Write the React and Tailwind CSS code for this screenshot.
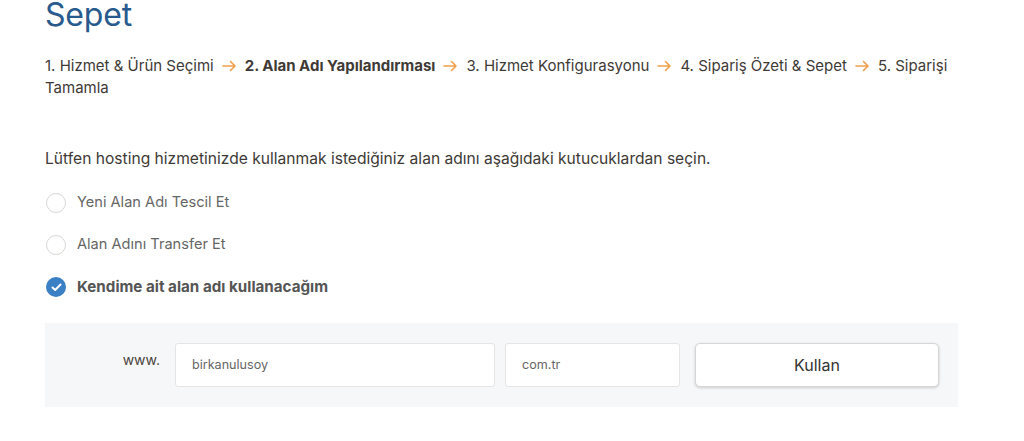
import React from "react";

const Arrow = () => (
  <svg className="inline-block align-baseline mx-[8px] relative top-[1px]" width="15" height="12" viewBox="0 0 15 12" fill="none">
    <path d="M1 6H13M8.5 1.5L13 6L8.5 10.5" stroke="#f0a04b" strokeWidth="1.6" strokeLinecap="round" strokeLinejoin="round" />
  </svg>
);

function Radio({ checked, label }) {
  return (
    <div className="flex items-center h-[42px]">
      {checked ? (
        <span className="w-[20px] h-[20px] rounded-full bg-[#3b7fc4] flex items-center justify-center">
          <svg width="11" height="9" viewBox="0 0 11 9" fill="none">
            <path d="M1.5 4.5L4.2 7L9.5 1.5" stroke="white" strokeWidth="2" strokeLinecap="round" strokeLinejoin="round" />
          </svg>
        </span>
      ) : (
        <span className="w-[20px] h-[20px] rounded-full border border-[#d9d6d3] bg-white" />
      )}
      <span className={"ml-[11px] " + (checked ? "text-[15.2px] font-bold text-[#555]" : "text-[14.6px] text-[#666]")}>{label}</span>
    </div>
  );
}

export default function App() {
  return (
    <div className="bg-white w-[1024px] h-[441px] overflow-hidden" style={{ fontFamily: "Inter, 'Noto Sans', sans-serif" }}>
      <div className="pl-[45px] w-[958px]">
        <h1 className="text-[32px] leading-[32px] -mt-[1px] text-[#285a8e] font-normal tracking-[-0.2px]">Sepet</h1>
        <div className="mt-[24px] text-[15px] leading-[22px] text-[#403a36]">
          1. Hizmet &amp; Ürün Seçimi<Arrow /><span className="font-bold">2. Alan Adı Yapılandırması</span><Arrow />3. Hizmet Konfigurasyonu<Arrow />4. Sipariş Özeti &amp; Sepet<Arrow />5. Siparişi Tamamla
        </div>
        <p className="mt-[49px] text-[15.6px] leading-[22px] text-[#403a36]">
          Lütfen hosting hizmetinizde kullanmak istediğiniz alan adını aşağıdaki kutucuklardan seçin.
        </p>
        <div className="mt-[12px] pl-[1px]">
          <Radio label="Yeni Alan Adı Tescil Et" />
          <Radio label="Alan Adını Transfer Et" />
          <Radio checked label="Kendime ait alan adı kullanacağım" />
        </div>
        <div className="mt-[15px] bg-[#f6f7f8] h-[84px] flex items-center pr-[19px]">
          <div className="w-[130px] flex justify-end pr-[15px] -mt-[12px] text-[14px] text-[#4a4440]">www.</div>
          <div className="w-[320px] h-[44px] bg-white border border-[#e5e5e5] rounded-[3px] flex items-center pl-[16px] text-[12.6px] text-[#666]">birkanulusoy</div>
          <div className="ml-[10px] w-[175px] h-[44px] bg-white border border-[#e5e5e5] rounded-[3px] flex items-center pl-[16px] text-[12.6px] text-[#666]">com.tr</div>
          <button className="ml-[15px] w-[244px] h-[44px] bg-white border border-[#d6d6d6] rounded-[5px] shadow-[0_1px_3px_rgba(0,0,0,0.18)] text-[16px] text-[#333]">Kullan</button>
        </div>
      </div>
    </div>
  );
}
